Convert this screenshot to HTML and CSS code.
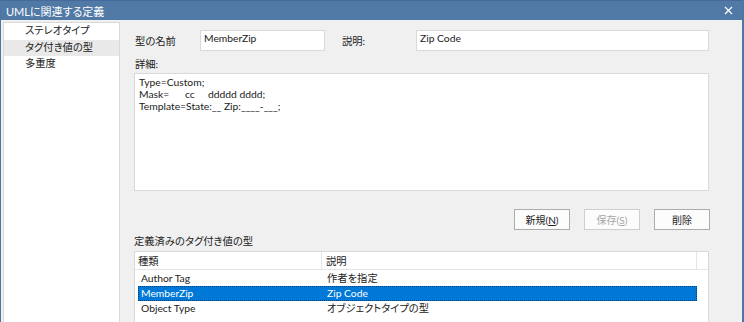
FILE: index.html
```html
<!DOCTYPE html>
<html lang="ja">
<head>
  <meta charset="UTF-8" />
  <title>UMLに関連する定義</title>
  <link rel="stylesheet" href="styles.css">
</head>
<body>
  <div class="window">
    <div class="titlebar">
      <span class="title">UMLに関連する定義</span>
      <svg class="close" width="9" height="9" viewBox="0 0 9 9">
        <path d="M1 1 L8 8 M8 1 L1 8" stroke="#fff" stroke-width="1.3" fill="none" />
      </svg>
    </div>

    <div class="content">
      <ul class="sidebar">
        <li>ステレオタイプ</li>
        <li class="active">タグ付き値の型</li>
        <li>多重度</li>
      </ul>

      <div class="main">
        <div class="field-row">
          <span class="label name-label">型の名前</span>
          <div class="input name-input">MemberZip</div>
          <span class="label desc-label">説明:</span>
          <div class="input desc-input">Zip Code</div>
        </div>

        <div class="label detail-label">詳細:</div>
        <div class="textarea">Type=Custom;
Mask=      cc     ddddd dddd;
Template=State:__ Zip:____-___;</div>

        <div class="button-row">
          <button>新規(<u>N</u>)</button>
          <button disabled>保存(<u>S</u>)</button>
          <button>削除</button>
        </div>

        <div class="label list-label">定義済みのタグ付き値の型</div>
        <div class="list">
          <div class="list-header">
            <div class="col-type">種類</div>
            <div class="col-desc">説明</div>
            <div class="col-fill"></div>
          </div>
          <div class="list-body">
            <div class="list-row">
              <div class="col-type">Author Tag</div>
              <div class="col-desc">作者を指定</div>
            </div>
            <div class="list-row selected">
              <div class="col-type">MemberZip</div>
              <div class="col-desc">Zip Code</div>
            </div>
            <div class="list-row">
              <div class="col-type">Object Type</div>
              <div class="col-desc">オブジェクトタイプの型</div>
            </div>
          </div>
        </div>
      </div>
    </div>
  </div>
</body>
</html>
```

FILE: styles.css
```css
* {
  box-sizing: border-box;
}
body {
  margin: 0;
  padding: 0;
  font-family: 'Lato', 'Noto Sans CJK JP', sans-serif;
  font-size: 10.3px;
  font-feature-settings: "palt";
  color: #222;
  background: #f0f0f0;
  overflow: hidden;
}
.window {
  width: 744px;
  height: 322px;
  border-left: 1px solid #4d76a2;
  border-right: 2px solid #4d76a2;
  background: #f0f0f0;
  overflow: hidden;
}
.titlebar {
  height: 20px;
  background: #5079a6;
  border-top: 1px solid #44699a;
  display: flex;
  align-items: center;
  justify-content: space-between;
  padding: 0 9px 0 5px;
  color: #fff;
}
.title {
  font-size: 11px;
}
.close {
  margin-top: -1px;
}

.content {
  display: flex;
  height: 302px;
}
.sidebar {
  list-style: none;
  margin: 2px 0 0 2px;
  padding: 0;
  width: 117px;
  background: #fff;
  border: 1px solid #d9d9d9;
  border-bottom: none;
}
.sidebar li {
  height: 16.5px;
  line-height: 15px;
  padding-left: 21px;
}
.sidebar li.active {
  background: #e9e9e9;
}

.main {
  flex: 1;
  padding: 10px 33px 0 14px;
}
.field-row {
  display: flex;
  align-items: center;
  height: 21px;
}
.label {
  white-space: nowrap;
}
.name-label {
  width: 66px;
  padding-left: 1px;
}
.desc-label {
  width: 74px;
  margin-left: 17px;
}
.input {
  height: 21px;
  background: #fff;
  border: 1px solid #d9d9d9;
  padding: 1px 3px;
}
.name-input {
  width: 125px;
}
.desc-input {
  flex: 1;
}
.detail-label {
  margin-top: 6px;
  height: 16px;
  line-height: 14px;
  padding-left: 1px;
}
.textarea {
  height: 118px;
  background: #fff;
  border: 1px solid #d9d9d9;
  padding: 2px 4px;
  white-space: pre;
  line-height: 12px;
}

.button-row {
  display: flex;
  justify-content: flex-end;
  gap: 14px;
  margin-top: 18px;
  margin-right: -1px;
}
.button-row button {
  width: 56px;
  height: 21px;
  font-family: inherit;
  font-size: 10px;
  font-feature-settings: "palt";
  color: #222;
  background: #fcfcfc;
  border: 1px solid #adadad;
  padding: 0;
}
.button-row button:disabled {
  color: #a6a6a6;
  border-color: #cfcfcf;
}

.list-label {
  margin-top: 4px;
  height: 17px;
  line-height: 15px;
}
.list {
  height: 80px;
  background: #fff;
  border: 1px solid #d9d9d9;
}
.list-header {
  display: flex;
  height: 18px;
  border-bottom: 1px solid #e5e5e5;
  line-height: 18px;
}
.list-header .col-type {
  width: 187px;
  padding-left: 3px;
  border-right: 1px solid #e5e5e5;
}
.list-header .col-desc {
  width: 375px;
  padding-left: 4px;
  border-right: 1px solid #e5e5e5;
}
.list-header .col-fill {
  flex: 1;
}
.list-body {
  padding: 1px 11px 0 3px;
}
.list-row {
  display: flex;
  height: 15px;
  line-height: 15px;
}
.list-row .col-type {
  width: 184px;
  padding-left: 3px;
}
.list-row .col-desc {
  flex: 1;
  padding-left: 5px;
}
.list-row.selected {
  background: #0078d7;
  color: #fff;
  outline: 1px dotted rgba(0, 0, 0, 0.45);
  outline-offset: -1px;
}
```
